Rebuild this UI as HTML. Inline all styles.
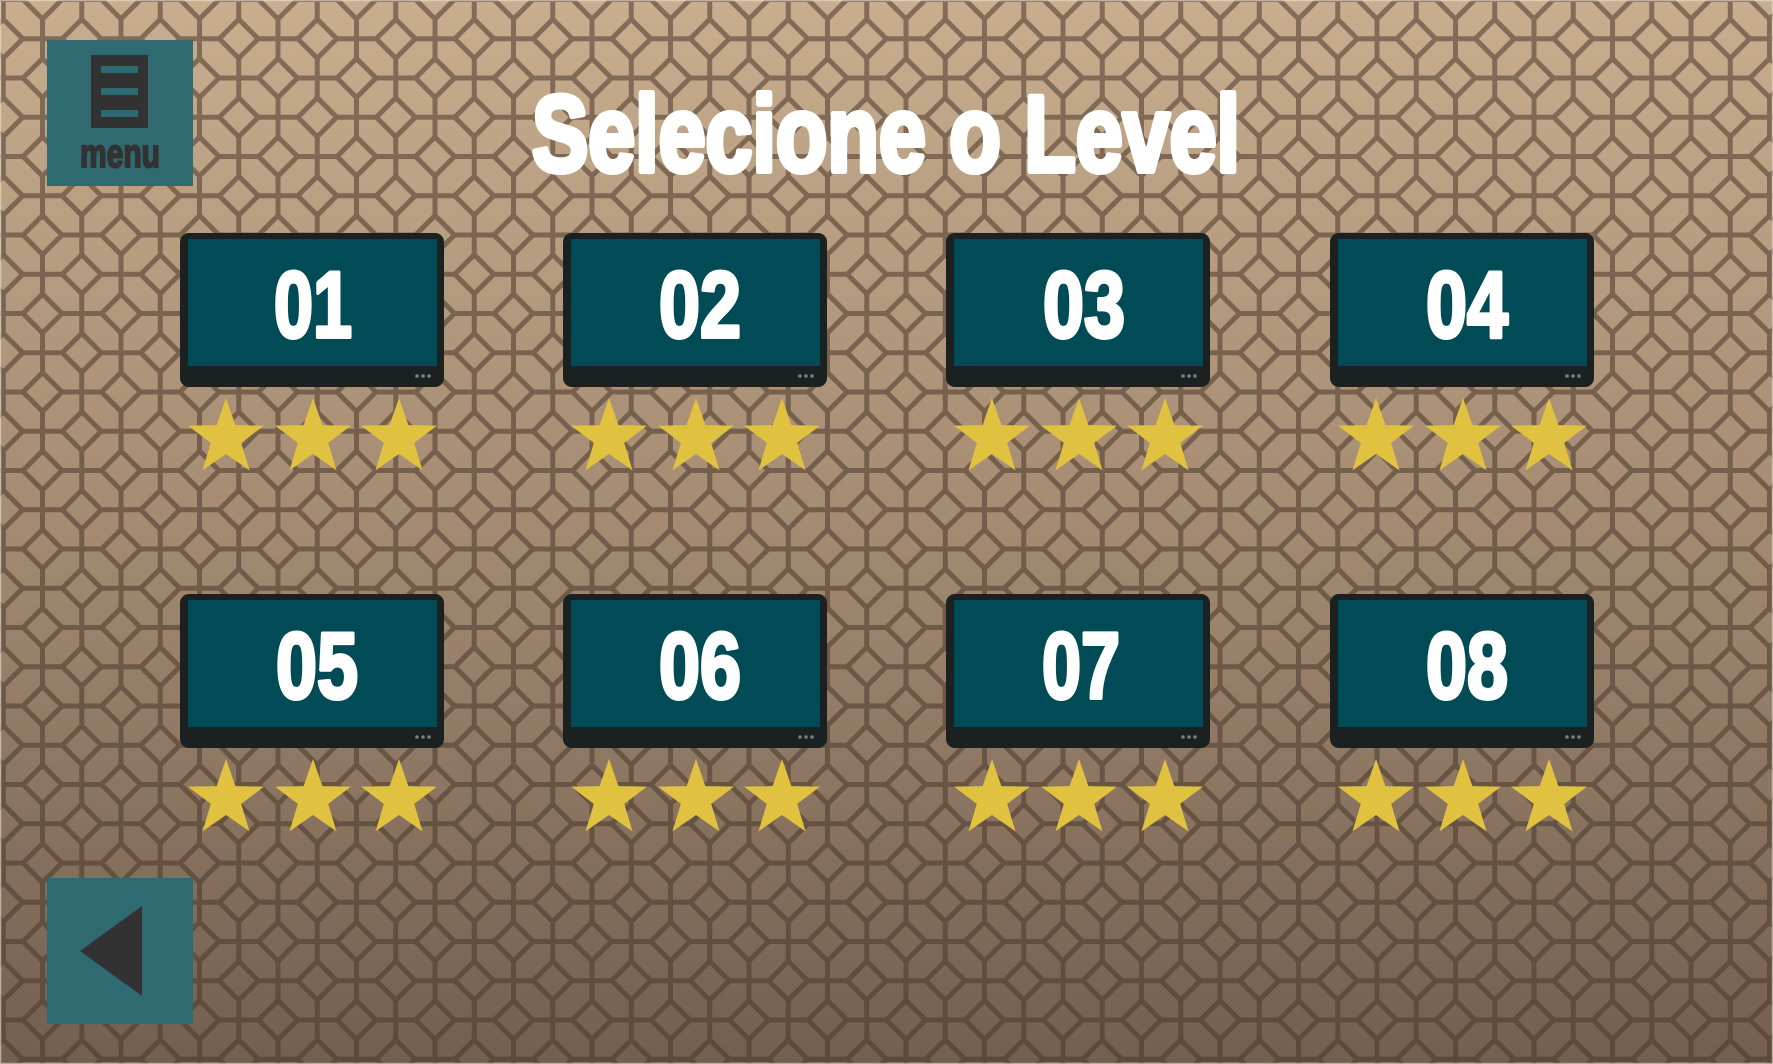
<!DOCTYPE html>
<html><head><meta charset="utf-8"><style>
html,body{margin:0;padding:0;width:1773px;height:1064px;overflow:hidden;background:#a08a72}
svg{display:block;overflow:hidden}
</style></head><body>
<svg id="s" width="1773" height="1064" viewBox="0 0 1773 1064" xmlns="http://www.w3.org/2000/svg">
<defs>
<linearGradient id="bg" gradientUnits="userSpaceOnUse" x1="0" y1="0" x2="0" y2="1064">
<stop offset="0" stop-color="#c8ae8e"/>
<stop offset="0.5" stop-color="#a38a71"/>
<stop offset="1" stop-color="#735f50"/>
</linearGradient>
<linearGradient id="ln" gradientUnits="userSpaceOnUse" x1="0" y1="0" x2="0" y2="1064">
<stop offset="0" stop-color="#846d58"/>
<stop offset="0.5" stop-color="#725d4a"/>
<stop offset="1" stop-color="#5d4a3c"/>
</linearGradient>
<clipPath id="cp"><rect width="1773" height="1064"/></clipPath>
<g id="star"><polygon fill="#e0c240" points="0,-40 9.4,-12.9 38,-12.4 15.2,4.9 23.5,32.4 0,16 -23.5,32.4 -15.2,4.9 -38,-12.4 -9.4,-12.9"/></g>
<g id="card">
<rect x="0" y="0" width="264" height="154" rx="9" fill="#1b2020"/>
<rect x="8" y="6" width="249" height="127" fill="#004b55"/>
<circle cx="237" cy="143" r="1.8" fill="#7a8080"/>
<circle cx="243" cy="143" r="1.8" fill="#7a8080"/>
<circle cx="249" cy="143" r="1.8" fill="#7a8080"/>
<use href="#star" x="46" y="205"/>
<use href="#star" x="133" y="205"/>
<use href="#star" x="219" y="205"/>
</g>
</defs>
<rect width="1773" height="1064" fill="url(#bg)"/>
<g id="pat" clip-path="url(#cp)"></g>
<rect x="0.5" y="0.5" width="1772" height="1063" fill="none" stroke="rgba(235,225,210,0.6)" stroke-width="1.5"/>

<rect x="47" y="40" width="146" height="146" fill="#2f6a73"/>
<rect x="91" y="55" width="57" height="73" fill="#333233"/>
<rect x="101" y="66" width="37" height="7" fill="#2f6a73"/>
<rect x="101" y="88" width="37" height="7" fill="#2f6a73"/>
<rect x="101" y="110" width="37" height="7" fill="#2f6a73"/>
<text x="120" y="167" text-anchor="middle" textLength="80" lengthAdjust="spacingAndGlyphs" font-family="Liberation Sans Narrow, Liberation Sans, sans-serif" font-weight="bold" font-size="40" fill="#333233" stroke="#333233" stroke-width="2">menu</text>

<text x="886" y="171" text-anchor="middle" textLength="708" lengthAdjust="spacingAndGlyphs" font-family="Liberation Sans Narrow, Liberation Sans, sans-serif" font-weight="bold" font-size="108" fill="#ffffff" stroke="#ffffff" stroke-width="6" stroke-linejoin="round">Selecione o Level</text>

<g font-family="Liberation Sans Narrow, Liberation Sans, sans-serif" font-weight="bold" font-size="94" fill="#fff" text-anchor="middle" stroke="#fff" stroke-width="4" stroke-linejoin="round">
<use href="#card" x="180" y="233" stroke="none"/><text x="313" y="337" textLength="78" lengthAdjust="spacingAndGlyphs">01</text>
<use href="#card" x="563" y="233" stroke="none"/><text x="700" y="337" textLength="82" lengthAdjust="spacingAndGlyphs">02</text>
<use href="#card" x="946" y="233" stroke="none"/><text x="1084" y="337" textLength="82" lengthAdjust="spacingAndGlyphs">03</text>
<use href="#card" x="1330" y="233" stroke="none"/><text x="1467" y="337" textLength="82" lengthAdjust="spacingAndGlyphs">04</text>
<use href="#card" x="180" y="594" stroke="none"/><text x="317" y="698" textLength="82" lengthAdjust="spacingAndGlyphs">05</text>
<use href="#card" x="563" y="594" stroke="none"/><text x="700" y="698" textLength="82" lengthAdjust="spacingAndGlyphs">06</text>
<use href="#card" x="946" y="594" stroke="none"/><text x="1081" y="698" textLength="78" lengthAdjust="spacingAndGlyphs">07</text>
<use href="#card" x="1330" y="594" stroke="none"/><text x="1467" y="698" textLength="82" lengthAdjust="spacingAndGlyphs">08</text>
</g>

<rect x="47" y="878" width="146" height="146" fill="#2f6a73"/>
<polygon points="80,951 142,906 142,996" fill="#333233"/>
</svg>
<script>
(function(){
var g=document.getElementById('pat'),P=39.25,x0=278,y0=78,r=19.5,lines='',dia='';
var jmin=Math.floor(-x0/P)-1,jmax=Math.ceil((1773-x0)/P)+1,kmin=Math.floor(-y0/P)-1,kmax=Math.ceil((1064-y0)/P)+1;
for(var j=jmin;j<=jmax;j++){var x=x0+j*P;lines+='M'+x+',0V1064';}
for(var k=kmin;k<=kmax;k++){var y=y0+k*P;lines+='M0,'+y+'H1773';}
for(var j=jmin;j<=jmax;j++)for(var k=kmin;k<=kmax;k++){if(((j+k)%2+2)%2)continue;var x=x0+j*P,y=y0+k*P;
dia+='M'+x+','+(y-r)+'L'+(x+r)+','+y+'L'+x+','+(y+r)+'L'+(x-r)+','+y+'Z';}
g.innerHTML='<path d="'+lines+'" stroke="url(#ln)" stroke-width="5" fill="none"/><path d="'+dia+'" fill="url(#bg)" stroke="url(#ln)" stroke-width="5" stroke-linejoin="miter"/>';
})();
</script>
</body></html>
